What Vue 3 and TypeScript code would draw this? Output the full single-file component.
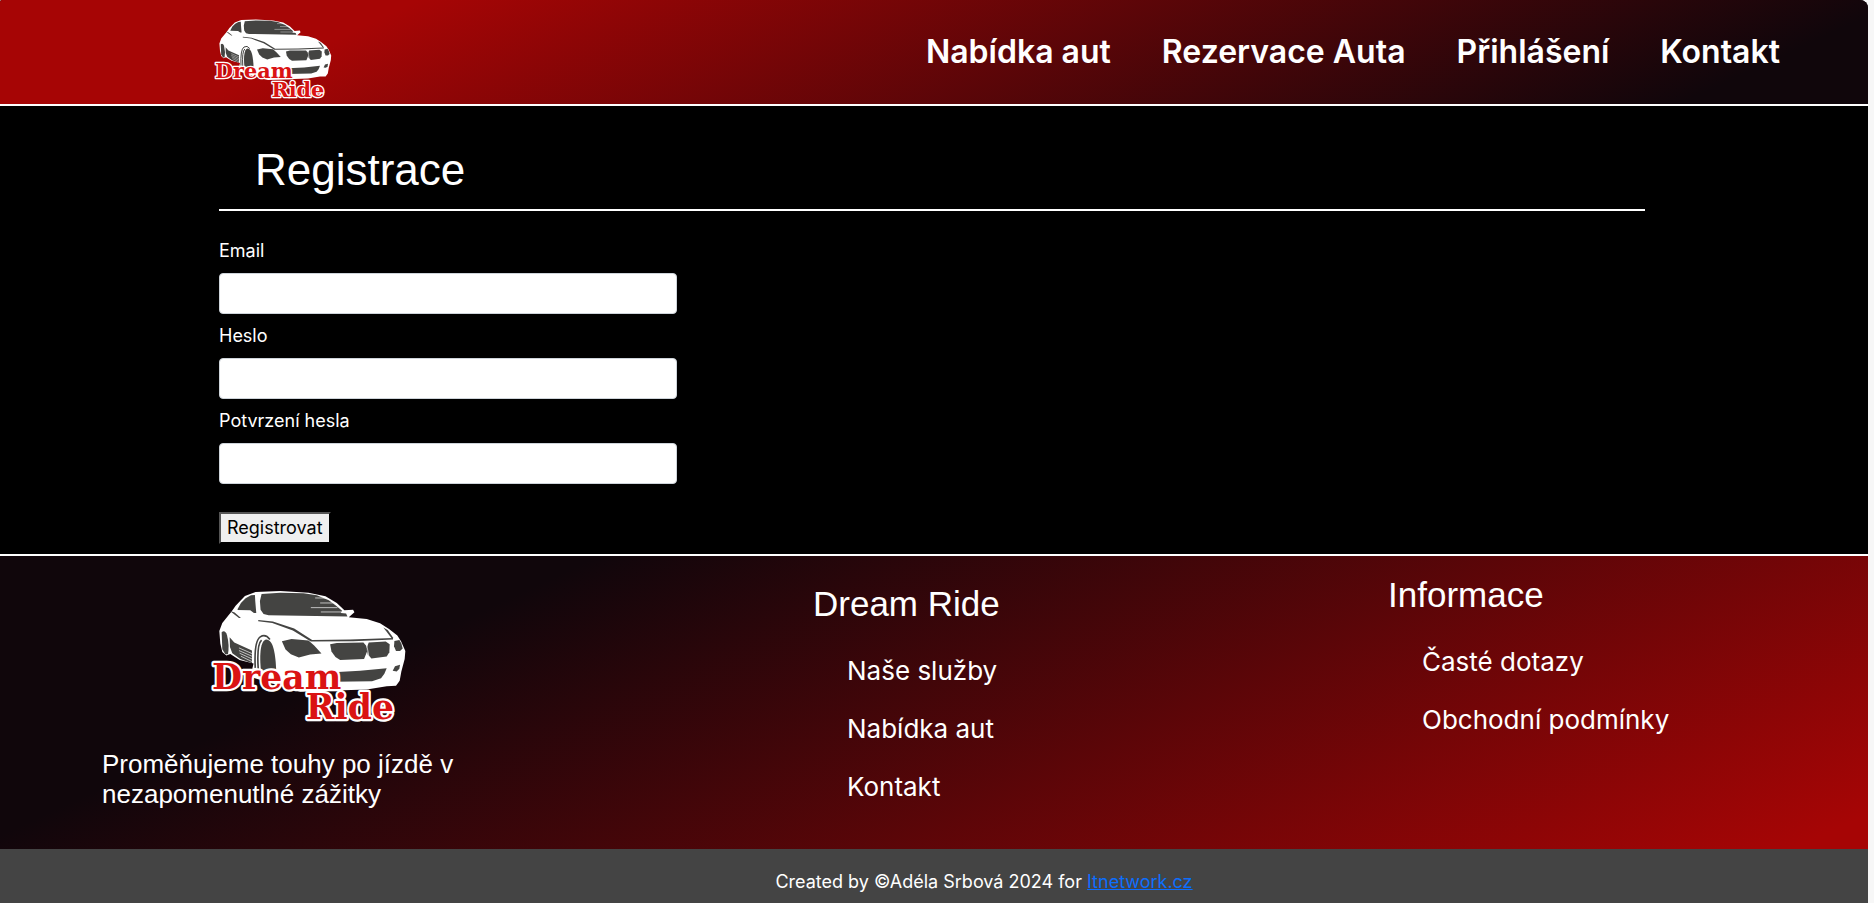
<script setup lang="ts">
import { defineComponent, h, reactive } from 'vue'

interface Field {
  id: 'email' | 'password' | 'confirm'
  label: string
  type: string
}

const navLinks: string[] = ['Nabídka aut', 'Rezervace Auta', 'Přihlášení', 'Kontakt']
const serviceLinks: string[] = ['Naše služby', 'Nabídka aut', 'Kontakt']
const infoLinks: string[] = ['Časté dotazy', 'Obchodní podmínky']

const fields: Field[] = [
  { id: 'email', label: 'Email', type: 'email' },
  { id: 'password', label: 'Heslo', type: 'password' },
  { id: 'confirm', label: 'Potvrzení hesla', type: 'password' },
]
const form = reactive({ email: '', password: '', confirm: '' })

const dark = '#444442'
const darkShapes: string[] = [
  // rear side window
  'M112 86L122 68L136 54L152 45L164 44L165 62L168 98L161 98L150 90L112 89Z',
  // windshield
  'M184 41L240 37L310 39L350 45L386 60L408 76L426 91L422 98L438 100L442 109L205 105L190 101L181 88L179 62Z',
  // mirror and hood seams
  'M88 91L103 97L122 113L116 113Z',
  'M174 119L218 124L282 145L336 179L450 178L579 173L579 178L460 183L332 184L278 151L216 128L174 123Z',
  'M550 142L563 149L580 173L574 173Z',
  // headlights
  'M245 183L274 176L325 181L342 196L364 220L330 223L296 232L272 222L256 208Z',
  'M583 182L598 179L604 190L608 205L600 212L588 212L582 198Z',
  // grille
  'M390 192L410 188L490 187L499 197L501 214L492 236L420 239L406 230L394 214Z',
  'M506 187L557 184L569 192L568 216L560 229L514 235L503 222L499 205Z',
  // lower intake and fog lamp
  'M400 276L480 272L560 264L553 281L543 294L516 303L400 305Z',
  'M578 272L585 258L600 254L598 266L590 274Z',
  // side skirt
  'M88 171L102 187L155 211L155 249L120 236L96 219L89 200Z',
]

const CarLogo = defineComponent({
  setup() {
    return () =>
      h('svg', { viewBox: '20 20 610 430', role: 'img', 'aria-label': 'Dream Ride' }, [
        h('path', {
          fill: '#fff',
          d: 'M95 92L106 76L134 47L166 35L240 32L325 37L376 48L410 68L433 90L459 88L463 96L446 111L500 116L540 129L567 146L592 166L603 183L616 212L614 236L604 274L599 302L588 317L560 318L500 328L430 330L300 335L150 290L160 250L118 239L90 221L78 226L66 215L60 190L57 152L66 128Z',
        }),
        h('path', { fill: dark, d: 'M64 156Q74 148 80 164Q88 195 83 222L75 222L66 207Z' }),
        ...darkShapes.map((d) => h('path', { d, fill: dark })),
        h('path', {
          fill: 'none', stroke: dark, 'stroke-width': 5,
          d: 'M165 263Q161 183 180 170Q196 160 209 178M174 267Q169 193 184 180',
        }),
        h('path', { fill: dark, d: 'M182 270C177 220 181 181 198 178C219 178 226 220 228 274Z' }),
        h('path', {
          fill: 'none', stroke: '#fff', 'stroke-width': 2,
          d: 'M345 53H378M360 68H398M332 82H412M362 95H430M116 203L155 220M116 211L155 228M118 219L155 236M122 228L155 244M500 194L506 226',
        }),
        h('g', {
          fill: '#da1313', stroke: '#fff', 'stroke-width': 13, 'stroke-linejoin': 'round',
          'paint-order': 'stroke', 'font-family': '"DejaVu Serif", serif', 'font-weight': 700, 'font-size': 104,
        }, [
          h('text', { x: 35, y: 326 }, 'Dream'),
          h('text', { x: 317, y: 418 }, 'Ride'),
        ]),
      ])
  },
})
</script>

<template>
  <div class="page">
    <header class="topbar">
      <a class="brand" href="#"><CarLogo class="logo" /></a>
      <nav class="nav">
        <a v-for="link in navLinks" :key="link" href="#">{{ link }}</a>
      </nav>
    </header>

    <main class="content">
      <h1>Registrace</h1>
      <form @submit.prevent>
        <div v-for="field in fields" :key="field.id" class="field">
          <label :for="field.id">{{ field.label }}</label>
          <input :id="field.id" v-model="form[field.id]" :type="field.type" />
        </div>
        <button type="submit">Registrovat</button>
      </form>
    </main>

    <footer>
      <div class="columns">
        <section class="about">
          <CarLogo class="logo" />
          <p>Proměňujeme touhy po jízdě v nezapomenutlné zážitky</p>
        </section>
        <section class="services">
          <h2>Dream Ride</h2>
          <ul>
            <li v-for="link in serviceLinks" :key="link"><a href="#">{{ link }}</a></li>
          </ul>
        </section>
        <section class="info">
          <h2>Informace</h2>
          <ul>
            <li v-for="link in infoLinks" :key="link"><a href="#">{{ link }}</a></li>
          </ul>
        </section>
      </div>
      <div class="credits">Created by ©Adéla Srbová 2024 for <a href="#">Itnetwork.cz</a></div>
    </footer>
  </div>
</template>

<style>
body {
  margin: 0;
  background: #f7f7f7;
}
</style>

<style scoped>
.page {
  display: flex;
  flex-direction: column;
  min-height: 100vh;
  margin-right: 6px;
  border-radius: 2px 8px 0 0;
  overflow: hidden;
  background: #000;
  color: #fff;
  font-family: Inter, sans-serif;
  font-size: 18px;
}
.page * {
  box-sizing: border-box;
}
.topbar {
  display: flex;
  align-items: center;
  justify-content: space-between;
  height: 106px;
  padding: 0 88px 0 212px;
  border-bottom: 2px solid #fff;
  background: linear-gradient(155deg, #a60505 20%, #10060b 91%);
}
.brand {
  padding-top: 16px;
}
.logo {
  display: block;
  width: 122px;
}
.nav {
  display: flex;
  gap: 51px;
}
.nav a {
  color: #fff;
  font-size: 32px;
  font-weight: 600;
  line-height: 48px;
  text-decoration: none;
}
.content {
  padding: 38px 223px 10px 219px;
}
h1,
h2 {
  margin: 0;
  font-family: "Liberation Sans", Arial, sans-serif;
  font-weight: 400;
}
h1 {
  padding: 0 36px 13px;
  border-bottom: 2px solid #fff;
  font-size: 44px;
  line-height: 52px;
}
form {
  padding-top: 26px;
}
.field {
  width: 458px;
  margin-bottom: 8px;
}
label {
  display: block;
  margin-bottom: 8px;
  line-height: 28px;
}
input {
  display: block;
  width: 100%;
  height: 41px;
  padding: 6px 12px;
  border: 1px solid #ced4da;
  border-radius: 4px;
  background: #fff;
  font: inherit;
}
button {
  display: block;
  height: 32px;
  margin-top: 28px;
  padding: 0 6px;
  border: 2px solid;
  border-color: #555 #000 #000 #555;
  border-radius: 0;
  background: #efefef;
  color: #000;
  font: inherit;
  line-height: 28px;
}
footer {
  display: flex;
  flex: 1;
  flex-direction: column;
  border-top: 2px solid #fff;
}
.columns {
  display: grid;
  flex: 1;
  grid-template-columns: 711fr 575fr 480fr;
  padding-left: 102px;
  background: linear-gradient(155deg, #10060b 24%, #a60505 97%);
}
.about {
  padding-top: 31px;
}
.about .logo {
  width: 203px;
  margin-left: 105px;
}
.about p {
  max-width: 400px;
  margin: 19px 0 0;
  font-family: "Liberation Sans", Arial, sans-serif;
  font-size: 26px;
  line-height: 30px;
}
.services {
  padding-top: 28px;
}
.info {
  padding-top: 19px;
}
h2 {
  font-size: 35px;
  line-height: 40px;
}
ul {
  display: grid;
  gap: 18px;
  margin: 0;
  padding: 27px 0 0 34px;
  list-style: none;
}
li {
  font-size: 26px;
  line-height: 40px;
}
li a {
  color: #fff;
  text-decoration: none;
}
.credits {
  height: 54px;
  padding-left: 100px;
  background: #444;
  line-height: 65px;
  text-align: center;
}
.credits a {
  color: #0d6efd;
}
</style>
